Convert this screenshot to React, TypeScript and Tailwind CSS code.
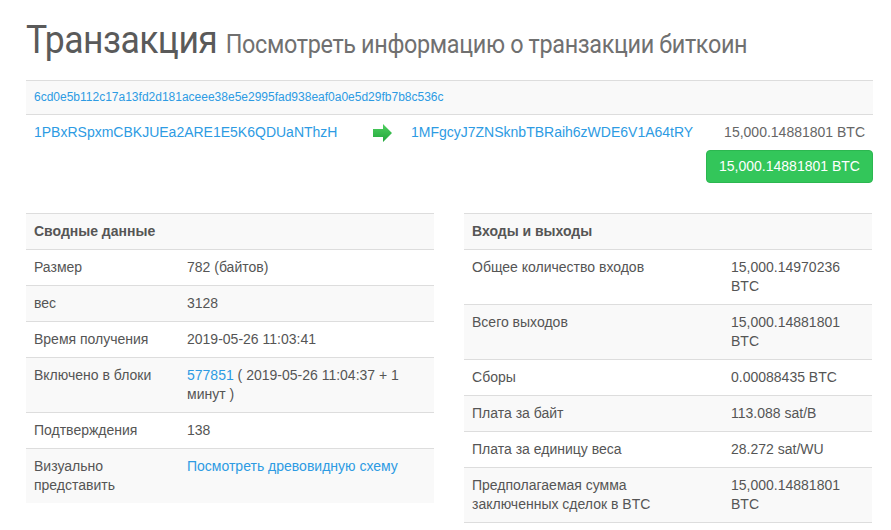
const left: [string, React.ReactNode][] = [
  ["Размер", "782 (байтов)"],
  ["вес", "3128"],
  ["Время получения", "2019-05-26 11:03:41"],
  [
    "Включено в блоки",
    <span>
      <a className="text-[#2d9be3]">577851</a> ( 2019-05-26 11:04:37 + 1 минут )
    </span>,
  ],
  ["Подтверждения", "138"],
  ["Визуально представить", <a className="text-[#2d9be3]">Посмотреть древовидную схему</a>],
];

const right: [string, string][] = [
  ["Общее количество входов", "15,000.14970236 BTC"],
  ["Всего выходов", "15,000.14881801 BTC"],
  ["Сборы", "0.00088435 BTC"],
  ["Плата за байт", "113.088 sat/B"],
  ["Плата за единицу веса", "28.272 sat/WU"],
  ["Предполагаемая сумма заключенных сделок в BTC", "15,000.14881801 BTC"],
];

function Panel({ title, rows, keyW, valW, lastBorder }: { title: string; rows: [string, React.ReactNode][]; keyW: string; valW: string; lastBorder?: boolean }) {
  return (
    <table className="w-[408px] table-fixed border-collapse text-[14px] leading-[19px] text-[#555]">
      <colgroup>
        <col className={keyW} />
        <col className={valW} />
      </colgroup>
      <thead>
        <tr className="bg-[#f9f9f9] border-t border-[#ddd]">
          <th colSpan={2} className="text-left font-bold px-2 py-2">{title}</th>
        </tr>
      </thead>
      <tbody>
        {rows.map(([k, v], i) => (
          <tr key={i} className={(i % 2 === 1 ? "bg-[#f9f9f9] " : "") + ((i < rows.length - 1 || lastBorder) ? "border-b " : "") + "border-t border-[#ddd]"}>
            <td className="align-top px-2 py-2">{k}</td>
            <td className="align-top px-2 py-2">{v}</td>
          </tr>
        ))}
      </tbody>
    </table>
  );
}

export default function App() {
  return (
    <div className="w-[891px] h-[530px] overflow-hidden bg-white font-['Liberation_Sans',Arial,sans-serif]">
      <div className="pl-[26px] pr-[18px]">
        <h1 className="pt-[19px] h-[80px] flex items-baseline gap-[9px] text-[#5a5a5a] font-['Roboto',sans-serif] origin-left scale-x-[0.936]">
          <span className="text-[38px] leading-[42px] tracking-[-0.6px]">Транзакция</span>
          <span className="text-[25px] text-[#707070] tracking-[-0.37px] whitespace-nowrap">Посмотреть информацию о транзакции биткоин</span>
        </h1>

        <div className="border-t border-b border-[#ddd] bg-[#f9f9f9] h-[35px] flex items-center px-2 text-[12px] text-[#2d9be3]">
          <span className="-mt-[2px]">6cd0e5b112c17a13fd2d181aceee38e5e2995fad938eaf0a0e5d29fb7b8c536c</span>
        </div>

        <div className="flex items-center h-[35px] px-2 text-[14px]">
          <a className="text-[#2d9be3] w-[339px]">1PBxRSpxmCBKJUEa2ARE1E5K6QDUaNThzH</a>
          <svg width="20" height="18" viewBox="0 0 20 18" className="mr-[18px]">
            <defs>
              <linearGradient id="g" x1="0" y1="0" x2="0" y2="1">
                <stop offset="0" stopColor="#4fd05f" />
                <stop offset="1" stopColor="#22a63c" />
              </linearGradient>
            </defs>
            <path d="M0 5 H10 V0 L19 9 L10 18 V13 H0 Z" fill="url(#g)" />
          </svg>
          <a className="text-[#2d9be3]">1MFgcyJ7ZNSknbTBRaih6zWDE6V1A64tRY</a>
          <span className="ml-auto text-[#666]">15,000.14881801 BTC</span>
        </div>
        <div className="flex justify-end">
          <div className="h-[33px] w-[167px] rounded-[4px] bg-[#33c65a] border border-[#2cb750] text-white text-[14px] flex items-center justify-center">
            15,000.14881801 BTC
          </div>
        </div>

        <div className="mt-[30px] flex items-start gap-[30px]">
          <Panel title="Сводные данные" rows={left} keyW="w-[153px]" valW="w-[255px]" />
          <Panel title="Входы и выходы" rows={right} keyW="w-[259px]" valW="w-[149px]" lastBorder />
        </div>
      </div>
    </div>
  );
}
